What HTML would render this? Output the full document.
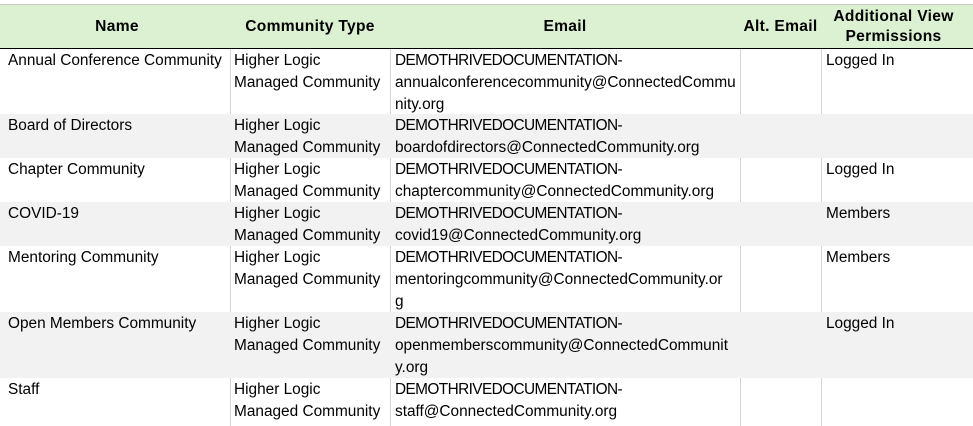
<!DOCTYPE html><html><head><style>
body{margin:0;width:973px;height:426px;overflow:hidden;background:#fff;font-family:"Liberation Sans",sans-serif;font-size:15.4px;color:#000;position:relative}
.top{position:absolute;left:0;top:0;width:973px;height:4px;background:#fff;border-bottom:1px solid #c8c8c8}
.hdr{position:absolute;left:0;top:5px;width:973px;height:43px;background:#dbf1d2;border-bottom:1.5px solid #000}
.h{position:absolute;font-weight:bold;text-align:center;font-size:15.6px;letter-spacing:0.3px;line-height:20px}
.row{position:absolute;left:0;width:973px}
.g{background:#f2f2f2}
.c{position:absolute;top:1px;line-height:22px;white-space:nowrap}
.u{letter-spacing:-0.6px}
.vl{position:absolute;top:0;width:1px;background:#d4d4d4}
</style></head><body>
<div class="top"></div>
<div class="hdr">
<div class="h" style="left:0;width:234px;top:12px">Name</div>
<div class="h" style="left:230px;width:160px;top:12px">Community Type</div>
<div class="h" style="left:390px;width:350px;top:12px">Email</div>
<div class="h" style="left:740px;width:81px;top:12px">Alt. Email</div>
<div class="h" style="left:821px;width:145px;top:2px">Additional View<br>Permissions</div>
</div>
<div class="row" style="top:49px;height:65px"><div class="c" style="left:8px">Annual Conference Community</div><div class="c" style="left:234px">Higher Logic<br>Managed Community</div><div class="c" style="left:395px"><span class="u">DEMOTHRIVEDOCUMENTATION-</span><br>annualconferencecommunity@ConnectedCommu<br>nity.org</div><div class="c" style="left:826px">Logged In</div>
<div class="vl" style="left:230px;height:65px"></div><div class="vl" style="left:390px;height:65px"></div><div class="vl" style="left:740px;height:65px"></div><div class="vl" style="left:821px;height:65px"></div></div>
<div class="row g" style="top:114px;height:44px"><div class="c" style="left:8px">Board of Directors</div><div class="c" style="left:234px">Higher Logic<br>Managed Community</div><div class="c" style="left:395px"><span class="u">DEMOTHRIVEDOCUMENTATION-</span><br>boardofdirectors@ConnectedCommunity.org</div></div>
<div class="row" style="top:158px;height:44px"><div class="c" style="left:8px">Chapter Community</div><div class="c" style="left:234px">Higher Logic<br>Managed Community</div><div class="c" style="left:395px"><span class="u">DEMOTHRIVEDOCUMENTATION-</span><br>chaptercommunity@ConnectedCommunity.org</div><div class="c" style="left:826px">Logged In</div>
<div class="vl" style="left:230px;height:44px"></div><div class="vl" style="left:390px;height:44px"></div><div class="vl" style="left:740px;height:44px"></div><div class="vl" style="left:821px;height:44px"></div></div>
<div class="row g" style="top:202px;height:44px"><div class="c" style="left:8px">COVID-19</div><div class="c" style="left:234px">Higher Logic<br>Managed Community</div><div class="c" style="left:395px"><span class="u">DEMOTHRIVEDOCUMENTATION-</span><br>covid19@ConnectedCommunity.org</div><div class="c" style="left:826px">Members</div></div>
<div class="row" style="top:246px;height:66px"><div class="c" style="left:8px">Mentoring Community</div><div class="c" style="left:234px">Higher Logic<br>Managed Community</div><div class="c" style="left:395px"><span class="u">DEMOTHRIVEDOCUMENTATION-</span><br>mentoringcommunity@ConnectedCommunity.or<br>g</div><div class="c" style="left:826px">Members</div>
<div class="vl" style="left:230px;height:66px"></div><div class="vl" style="left:390px;height:66px"></div><div class="vl" style="left:740px;height:66px"></div><div class="vl" style="left:821px;height:66px"></div></div>
<div class="row g" style="top:312px;height:66px"><div class="c" style="left:8px">Open Members Community</div><div class="c" style="left:234px">Higher Logic<br>Managed Community</div><div class="c" style="left:395px"><span class="u">DEMOTHRIVEDOCUMENTATION-</span><br>openmemberscommunity@ConnectedCommunit<br>y.org</div><div class="c" style="left:826px">Logged In</div></div>
<div class="row" style="top:378px;height:48px"><div class="c" style="left:8px">Staff</div><div class="c" style="left:234px">Higher Logic<br>Managed Community</div><div class="c" style="left:395px"><span class="u">DEMOTHRIVEDOCUMENTATION-</span><br>staff@ConnectedCommunity.org</div>
<div class="vl" style="left:230px;height:48px"></div><div class="vl" style="left:390px;height:48px"></div><div class="vl" style="left:740px;height:48px"></div><div class="vl" style="left:821px;height:48px"></div></div>
</body></html>
